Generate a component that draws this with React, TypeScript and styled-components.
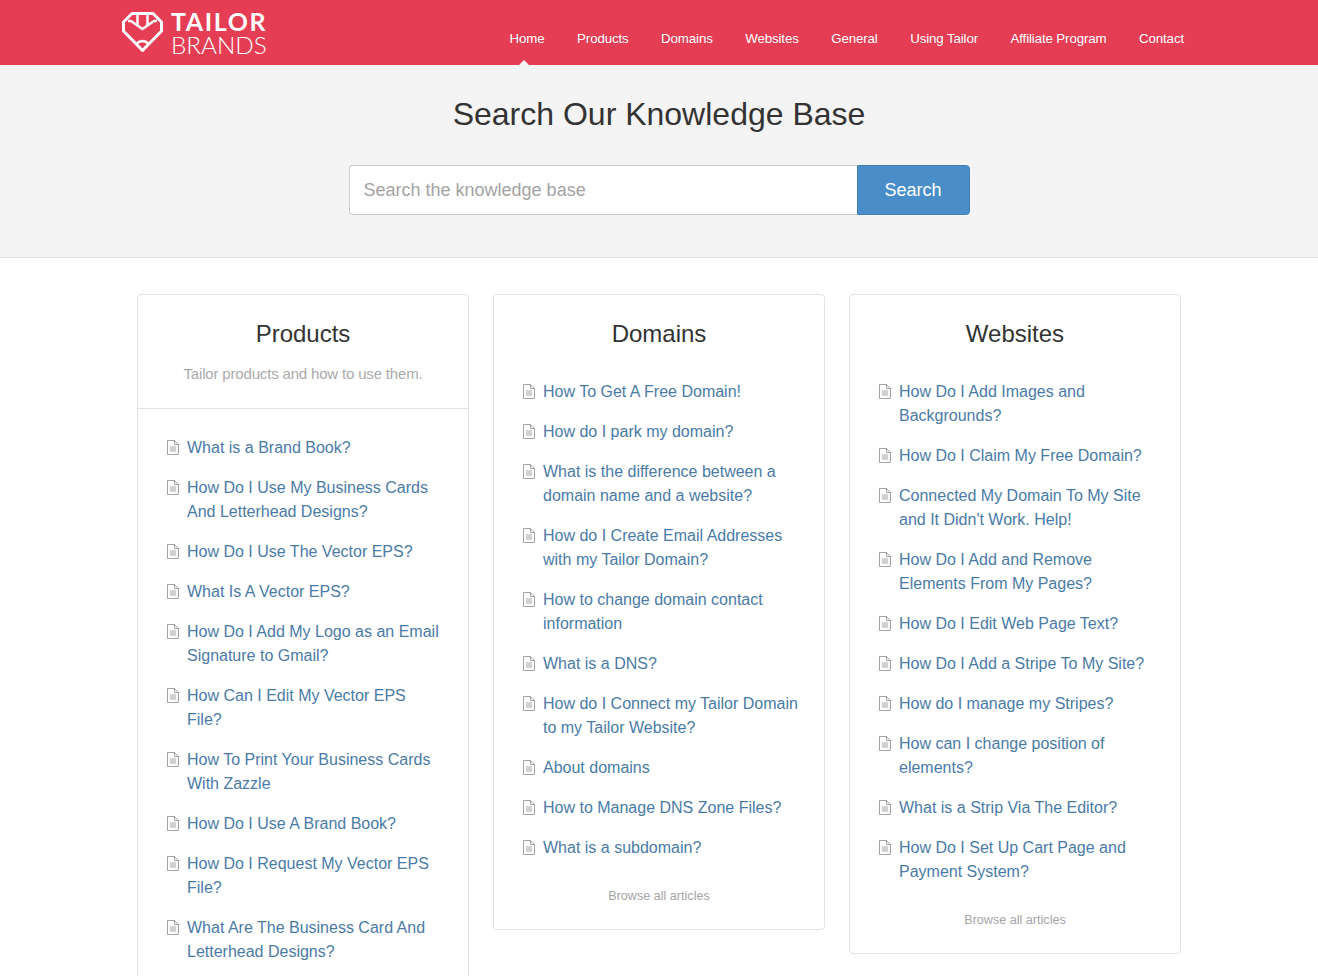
import React from "react"
import styled, { createGlobalStyle } from "styled-components"

const GlobalStyle = createGlobalStyle`
  html, body { margin: 0; padding: 0; background: #fff; }
  body {
    font-family: "Liberation Sans", Arial, sans-serif;
    font-size: 16px;
    color: #333;
    height: 976px;
    overflow: hidden;
  }
  * { box-sizing: border-box; }
`

const NAV = ["Home", "Products", "Domains", "Websites", "General", "Using Tailor", "Affiliate Program", "Contact"]

const COLUMNS: { title: string; desc?: string; browse?: boolean; items: string[] }[] = [
  {
    title: "Products",
    desc: "Tailor products and how to use them.",
    items: [
      "What is a Brand Book?",
      "How Do I Use My Business Cards And Letterhead Designs?",
      "How Do I Use The Vector EPS?",
      "What Is A Vector EPS?",
      "How Do I Add My Logo as an Email Signature to Gmail?",
      "How Can I Edit My Vector EPS File?",
      "How To Print Your Business Cards With Zazzle",
      "How Do I Use A Brand Book?",
      "How Do I Request My Vector EPS File?",
      "What Are The Business Card And Letterhead Designs?",
    ],
  },
  {
    title: "Domains",
    items: [
      "How To Get A Free Domain!",
      "How do I park my domain?",
      "What is the difference between a domain name and a website?",
      "How do I Create Email Addresses with my Tailor Domain?",
      "How to change domain contact information",
      "What is a DNS?",
      "How do I Connect my Tailor Domain to my Tailor Website?",
      "About domains",
      "How to Manage DNS Zone Files?",
      "What is a subdomain?",
    ],
    browse: true,
  },
  {
    title: "Websites",
    items: [
      "How Do I Add Images and Backgrounds?",
      "How Do I Claim My Free Domain?",
      "Connected My Domain To My Site and It Didn't Work. Help!",
      "How Do I Add and Remove Elements From My Pages?",
      "How Do I Edit Web Page Text?",
      "How Do I Add a Stripe To My Site?",
      "How do I manage my Stripes?",
      "How can I change position of elements?",
      "What is a Strip Via The Editor?",
      "How Do I Set Up Cart Page and Payment System?",
    ],
    browse: true,
  },
]

const Header = styled.header`
  height: 65px;
  background: #e43d54;
  display: flex;
  justify-content: space-between;
  padding: 0 134px 0 122px;
`

const Brand = styled.a`
  display: flex;
  align-items: center;
  gap: 8px;
  color: #fff;
  height: 65px;
`

const BrandText = styled.div`
  font-family: Lato, "Open Sans", sans-serif;
  display: flex;
  flex-direction: column;
  width: 98px;
`

const BrandTop = styled.span`
  font-size: 25px;
  line-height: 23px;
  font-weight: 700;
  letter-spacing: 1.6px;
`

const BrandBottom = styled.span`
  font-size: 24.3px;
  line-height: 23px;
  font-weight: 300;
  letter-spacing: 0;
`

const Nav = styled.nav`
  display: flex;
  gap: 32.5px;
`

const NavLink = styled.a<{ $active?: boolean }>`
  position: relative;
  color: #fff;
  font-size: 13.3px;
  line-height: 20px;
  padding-top: 29px;
  height: 65px;
  letter-spacing: -0.12px;

  &::after {
    content: "";
    display: ${(p) => (p.$active ? "block" : "none")};
    position: absolute;
    left: 50%;
    bottom: 0;
    margin-left: -8px;
    border-left: 5px solid transparent;
    border-right: 5px solid transparent;
    border-bottom: 5px solid #f4f4f4;
  }
`

const Hero = styled.section`
  height: 193px;
  background: #f4f4f4;
  border-bottom: 1px solid #e3e3e3;
  display: flex;
  flex-direction: column;
  align-items: center;
`

const HeroTitle = styled.h1`
  margin: 29px 0 0;
  font-size: 32px;
  line-height: 40px;
  font-weight: 400;
  color: #333;
`

const SearchForm = styled.form`
  display: flex;
  width: 621px;
  height: 50px;
  margin-top: 31px;
`

const SearchInput = styled.input`
  flex: 1;
  min-width: 0;
  height: 50px;
  padding: 0 14px;
  font: 18px "Liberation Sans", Arial, sans-serif;
  color: #555;
  background: #fff;
  border: 1px solid #ccc;
  border-right: 0;
  border-radius: 4px 0 0 4px;
  outline: none;

  &::placeholder {
    color: #a3a3a3;
    opacity: 1;
  }
`

const SearchButton = styled.button`
  width: 113px;
  height: 50px;
  font: 18px "Liberation Sans", Arial, sans-serif;
  color: #fff;
  background: #4a8ec9;
  border: 1px solid #4180b8;
  border-radius: 0 4px 4px 0;
  padding: 0;
`

const Grid = styled.main`
  display: grid;
  grid-template-columns: repeat(3, 332px);
  gap: 24px;
  align-items: start;
  justify-content: center;
  padding-top: 36px;
`

/* the first card runs on past the bottom of the window */
const Card = styled.article<{ $open?: boolean }>`
  background: #fff;
  border: 1px solid #e2e2e2;
  border-radius: 4px;
  padding-bottom: ${(p) => (p.$open ? "40px" : "0")};
`

const CardHead = styled.div<{ $bordered?: boolean }>`
  padding: 24px 20px 0;
  text-align: center;
  height: ${(p) => (p.$bordered ? "114px" : "auto")};
  border-bottom: ${(p) => (p.$bordered ? "1px solid #e2e2e2" : "0")};
`

const CardTitle = styled.h2`
  margin: 0;
  font-size: 24px;
  line-height: 30px;
  font-weight: 400;
  color: #333;
`

const CardDesc = styled.p`
  margin: 15px 0 0;
  font-size: 15px;
  line-height: 20px;
  color: #aaa;
  letter-spacing: -0.17px;
  white-space: nowrap;
`

const List = styled.ul<{ $first?: boolean }>`
  list-style: none;
  margin: 0;
  padding: ${(p) => (p.$first ? "27px" : "31px")} 25px 0 29px;
  display: flex;
  flex-direction: column;
  gap: 16px;
`

const Item = styled.li`
  position: relative;
  padding-left: 20px;
  font-size: 16px;
  line-height: 24px;
  color: #4a7ba6;
`

const DocIcon = styled.svg`
  position: absolute;
  left: -1px;
  top: 4px;
  width: 14px;
  height: 15px;
  fill: none;
  stroke: #a3a3a3;
  stroke-width: 1;
`

const Browse = styled.a`
  display: block;
  padding: 26px 0 23px;
  text-align: center;
  font-size: 12.6px;
  line-height: 20px;
  color: #a5a5a5;
`

function Logo() {
  return (
    <svg width="41" height="41" viewBox="0 0 41 41" fill="none" stroke="#fff" strokeWidth="3" strokeLinejoin="round">
      <path d="M10 1.500 H31 L39.500 10 V19 L20.500 38.500 L1.500 19 V10 Z" />
      <path d="M6 9 H9 L20.500 17 L32 9 H35" strokeWidth="2.500" />
      <path d="M15.500 2 V13 M25.500 2 V13" strokeWidth="2.500" />
      <path d="M14 32 Q20.500 26 27 32" strokeWidth="2.500" />
    </svg>
  )
}

function Doc() {
  return (
    <DocIcon viewBox="0 0 14 15">
      <path d="M1.500 .5 H8.500 L12.500 4.500 V14.500 H1.500 Z M8.500 .5 V4.500 H12.500" />
      <path d="M4 7 H10 M4 9 H10 M4 11 H10" />
    </DocIcon>
  )
}

export default function App() {
  return (
    <>
      <GlobalStyle />
      <Header>
        <Brand>
          <Logo />
          <BrandText>
            <BrandTop>TAILOR</BrandTop>
            <BrandBottom>BRANDS</BrandBottom>
          </BrandText>
        </Brand>
        <Nav>
          {NAV.map((label) => (
            <NavLink key={label} $active={label === "Home"}>
              {label}
            </NavLink>
          ))}
        </Nav>
      </Header>

      <Hero>
        <HeroTitle>Search Our Knowledge Base</HeroTitle>
        <SearchForm>
          <SearchInput placeholder="Search the knowledge base" />
          <SearchButton type="button">Search</SearchButton>
        </SearchForm>
      </Hero>

      <Grid>
        {COLUMNS.map((col) => (
          <Card key={col.title} $open={!col.browse}>
            <CardHead $bordered={!!col.desc}>
              <CardTitle>{col.title}</CardTitle>
              {col.desc && <CardDesc>{col.desc}</CardDesc>}
            </CardHead>
            <List $first={!!col.desc}>
              {col.items.map((item) => (
                <Item key={item}>
                  <Doc />
                  {item}
                </Item>
              ))}
            </List>
            {col.browse && <Browse>Browse all articles</Browse>}
          </Card>
        ))}
      </Grid>
    </>
  )
}
